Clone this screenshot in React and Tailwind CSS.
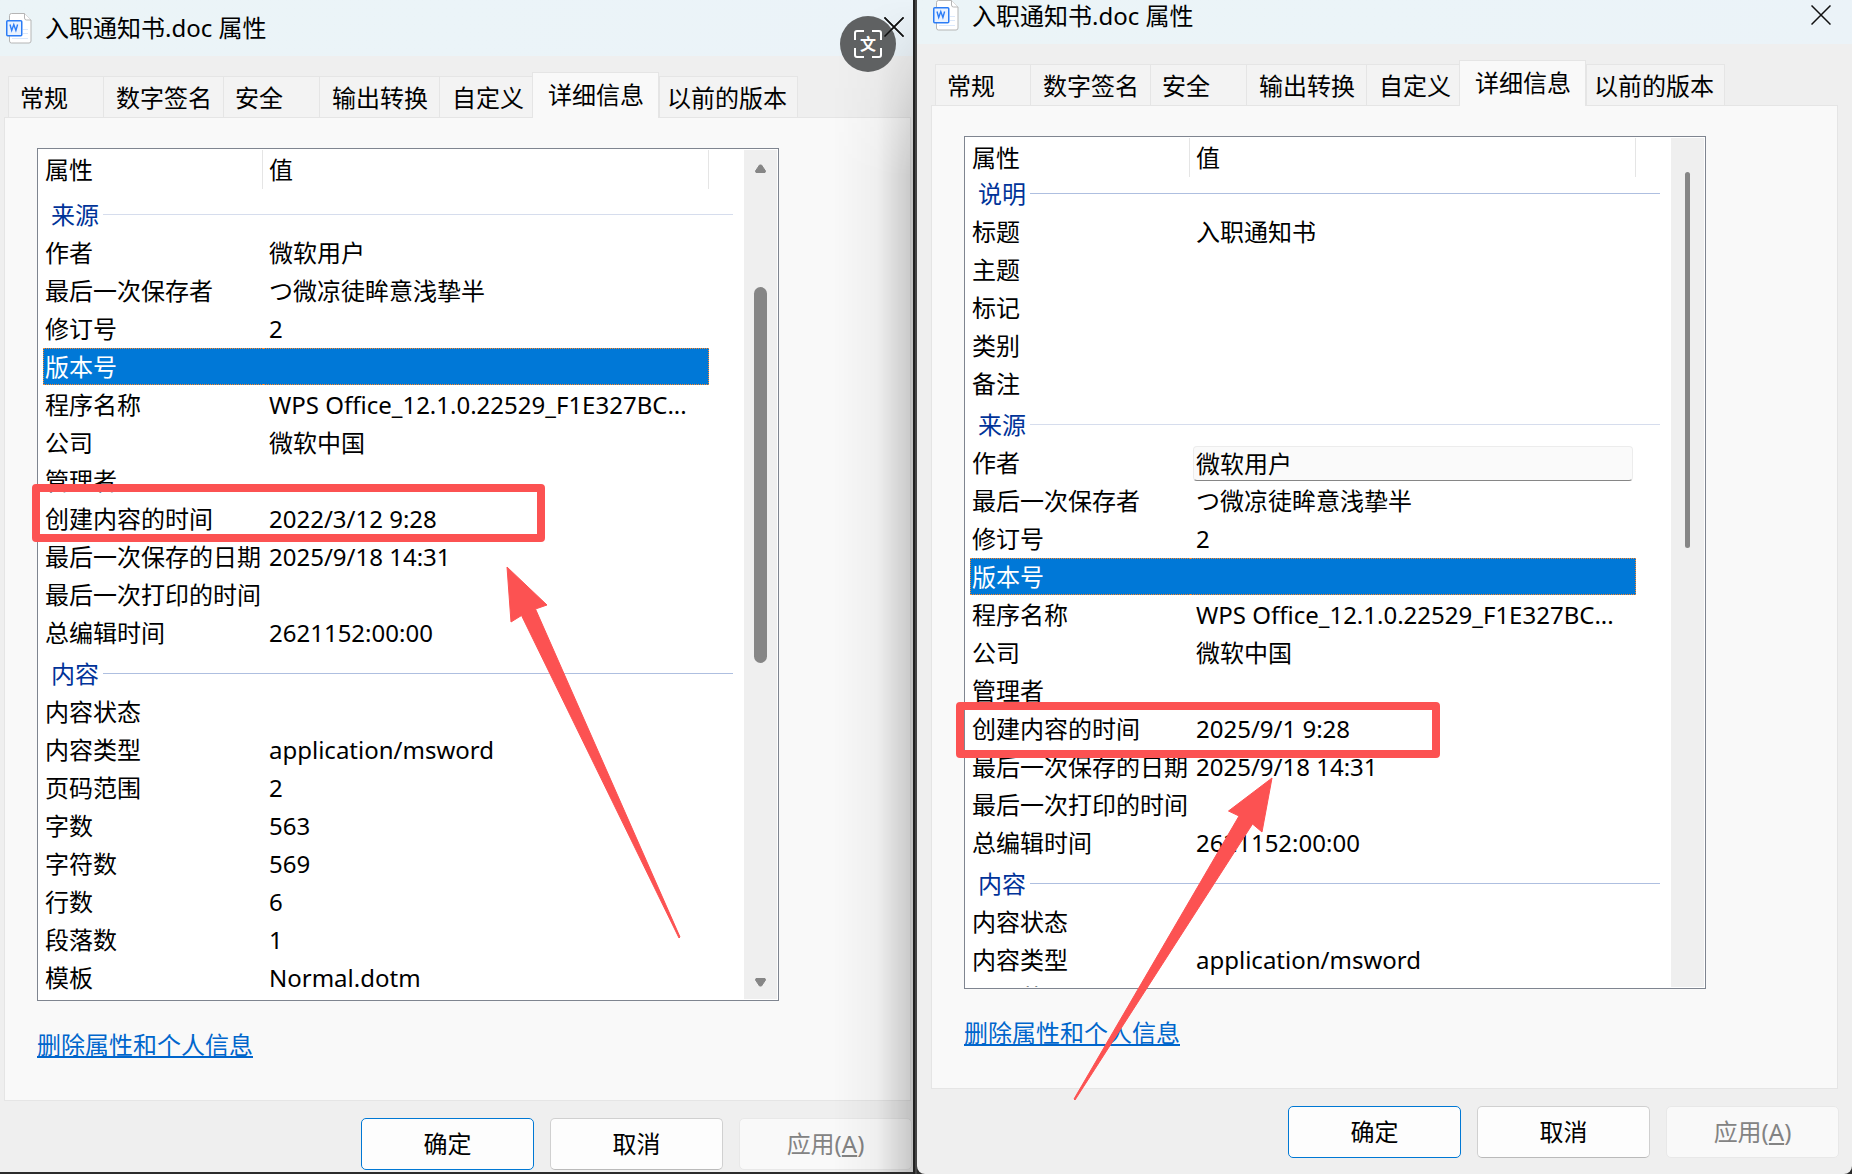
import React, { useState } from 'react';
import clsx from 'clsx';

const TABS = [
  { name: '常规', className: 'w-[95px] pl-[11px]' },
  { name: '数字签名', className: 'w-[120px] pl-3' },
  { name: '安全', className: 'w-24 pl-[11px]' },
  { name: '输出转换', className: 'w-[120px] pl-3' },
  { name: '自定义', className: 'w-[93px] pl-3' },
  { name: '详细信息', className: 'w-[127px] pl-[15px]' },
  { name: '以前的版本', className: 'w-[139px] pl-[7px] border-r' },
];

const originRows = (created) => [
  ['作者', '微软用户'],
  ['最后一次保存者', 'つ微凉徒眸意浅挚半'],
  ['修订号', '2'],
  ['版本号', ''],
  ['程序名称', 'WPS Office_12.1.0.22529_F1E327BC...'],
  ['公司', '微软中国'],
  ['管理者', ''],
  ['创建内容的时间', created],
  ['最后一次保存的日期', '2025/9/18 14:31'],
  ['最后一次打印的时间', ''],
  ['总编辑时间', '2621152:00:00'],
];

const contentRows = [
  ['内容状态', ''],
  ['内容类型', 'application/msword'],
  ['页码范围', '2'],
  ['字数', '563'],
  ['字符数', '569'],
  ['行数', '6'],
  ['段落数', '1'],
  ['模板', 'Normal.dotm'],
];

const leftGroups = [
  { title: '来源', faint: true, rows: originRows('2022/3/12 9:28') },
  { title: '内容', rows: contentRows },
];

const rightGroups = [
  {
    title: '说明',
    rows: [
      ['标题', '入职通知书'],
      ['主题', ''],
      ['标记', ''],
      ['类别', ''],
      ['备注', ''],
    ],
  },
  { title: '来源', faint: true, rows: originRows('2025/9/1 9:28') },
  { title: '内容', rows: contentRows.slice(0, 3) },
];

const DocIcon = () => (
  <svg width="26" height="31" viewBox="0 0 26 31" fill="none" aria-hidden="true">
    <path
      d="M5.5.5h13l6.5 6.5v21a2 2 0 0 1-2 2H5.500a2 2 0 0 1-2-2V2.500a2 2 0 0 1 2-2z"
      fill="#fff"
      stroke="#b5b5b5"
    />
    <path d="M18.500.5v4.500a2 2 0 0 0 2 2H25" fill="#fff" stroke="#b5b5b5" />
    <path d="M17 16.500h5M17 20.500h5M6 25.500h16" stroke="#dbe8fb" />
    <rect x=".75" y="7.750" width="15" height="15" rx="1" fill="#e9f2ff" stroke="#2b7cf6" strokeWidth="1.500" />
    <path d="M4 11.500l1.700 6 2.100-6 2.100 6 1.700-6" stroke="#2b7cf6" strokeWidth="1.400" />
  </svg>
);

const CloseIcon = () => (
  <svg width="20" height="20" viewBox="0 0 20 20" aria-hidden="true">
    <path d="M.5.5l19 19M19.500.5l-19 19" stroke="#111" strokeWidth="1.500" />
  </svg>
);

const Arrow = ({ down }) => (
  <svg width="11" height="9" viewBox="0 0 11 9" aria-hidden="true">
    <path
      d={down ? 'M1 .5h9l.5 1.500L6.500 8h-2L.5 2z' : 'M1 8.500h9l.5-1.500L6.500 1h-2L.5 7z'}
      fill="#868686"
      stroke="#868686"
      strokeLinejoin="round"
    />
  </svg>
);

const Scrollbar = ({ thin }) => (
  <div className="my-px mr-px flex w-[33px] shrink-0 flex-col items-center bg-[#efefef]">
    <div className="flex h-[34px] w-full items-center justify-center pt-[2px]">
      {!thin && <Arrow />}
    </div>
    <div
      className={clsx(
        'h-[376px] rounded-full bg-[#868686]',
        thin ? 'w-[5px]' : 'mt-[103px] w-[13px]'
      )}
    />
    <div className="mt-auto flex h-[34px] w-full items-center justify-center">
      {!thin && <Arrow down />}
    </div>
  </div>
);

const PropertyRow = ({ label, value, editing }) => {
  const selected = label === '版本号';
  const cell = 'mb-px h-[37px] whitespace-nowrap border-y border-dotted leading-9';

  return (
    <tr>
      <th scope="row" className="p-0 text-left font-normal">
        <div
          className={clsx(
            cell,
            'border-l pl-px',
            selected ? 'border-[#ff8728] bg-[#0078d7] text-white' : 'border-transparent'
          )}
        >
          {label}
        </div>
      </th>
      <td className="p-0">
        {editing ? (
          <input
            aria-label={label}
            defaultValue={value}
            className="ml-[3px] block h-[35px] w-[calc(100%-6px)] rounded-sm border border-[#ececec] border-b-[#868686] bg-[#fafafa] pb-[2px] pl-[2px] outline-none"
          />
        ) : (
          <div
            className={clsx(
              cell,
              'border-r pl-[6px]',
              selected ? 'border-[#ff8728] bg-[#0078d7] text-white' : 'border-transparent'
            )}
          >
            {value}
          </div>
        )}
      </td>
      <td className="p-0" />
    </tr>
  );
};

const PropertyList = ({ groups, thin, editing, bodyClass }) => (
  <div className="mt-[30px] mr-[131px] ml-8 flex h-[853px] overflow-hidden border border-[#7f8590] bg-white">
    <div className="mb-px min-w-0 flex-1 overflow-hidden pr-[11px] pl-[5px]">
      <table className="w-full table-fixed border-separate border-spacing-0">
        <colgroup>
          <col className="w-[220px]" />
          <col />
          <col className="w-6" />
        </colgroup>
        <thead>
          <tr>
            <th className="p-0 text-left font-normal">
              <div className="mt-px h-[39px] border-r border-[#e5e5e5] pl-[2px] leading-10">属性</div>
            </th>
            <th className="p-0 text-left font-normal">
              <div className="mt-px h-[39px] border-r border-[#e5e5e5] pl-[6px] leading-10">值</div>
            </th>
            <td />
          </tr>
        </thead>
      </table>
      <table className={clsx('w-full table-fixed border-separate border-spacing-0', bodyClass)}>
        <colgroup>
          <col className="w-[220px]" />
          <col />
          <col className="w-6" />
        </colgroup>
        {groups.map((group) => (
          <tbody key={group.title}>
            <tr>
              <th colSpan={3} scope="rowgroup" className="p-0 text-left font-normal">
                <div className="flex h-[41px] items-center gap-1 pt-px pl-2 leading-10 text-[#003399]">
                  <span className="pt-[2px]">{group.title}</span>
                  <span className={clsx('h-px flex-1', group.faint ? 'bg-[#d6dded]' : 'bg-[#aebfe0]')} />
                </div>
              </th>
            </tr>
            {group.rows.map(([label, value]) => (
              <PropertyRow
                key={label}
                label={label}
                value={value}
                editing={editing === label}
              />
            ))}
          </tbody>
        ))}
      </table>
    </div>
    <Scrollbar thin={thin} />
  </div>
);

const Dialog = ({ groups, thin, editing, className, titleClass, bodyClass, bodyTableClass, footerClass }) => {
  const [active, setActive] = useState('详细信息');

  return (
    <section className={clsx('relative flex flex-col overflow-hidden bg-[#efefef]', className)}>
      <header className={clsx('flex justify-between bg-linear-to-r from-[#ebf4f7] via-[#ebf4f8] to-[#ebf3f8]', titleClass)}>
        <div className="flex items-center gap-[13px]">
          <DocIcon />
          <h1>入职通知书.doc 属性</h1>
        </div>
        <button aria-label="关闭" className="pb-[2px]">
          <CloseIcon />
        </button>
      </header>

      <div className={bodyClass}>
        <div role="tablist" className="flex h-[61px] items-end pl-1">
          {TABS.map((tab) => (
            <button
              key={tab.name}
              role="tab"
              aria-selected={active === tab.name}
              onClick={() => setActive(tab.name)}
              className={clsx(
                'shrink-0 border-t border-l border-[#e5e5e5] text-left whitespace-nowrap',
                tab.className,
                active === tab.name
                  ? 'relative -mb-px h-[46px] border-r bg-[#f9f9f9] pb-[2px]'
                  : 'h-[41px] bg-[#f3f3f3] pt-[2px]'
              )}
            >
              {tab.name}
            </button>
          ))}
        </div>
        <div className="h-[984px] border border-[#e5e5e5] bg-[#f9f9f9]">
          <PropertyList groups={groups} thin={thin} editing={editing} bodyClass={bodyTableClass} />
          <a
            href="#remove"
            className="mt-[26px] ml-8 inline-block leading-9 text-[#0066cc] underline decoration-2 underline-offset-2"
          >
            删除属性和个人信息
          </a>
        </div>
      </div>

      <footer className={clsx('flex justify-end gap-4 pt-[17px]', footerClass)}>
        <button className="h-[52px] w-[173px] rounded-[5px] border border-[#0078d4] bg-[#fdfdfd]">确定</button>
        <button className="h-[52px] w-[173px] rounded-[5px] border border-[#d0d0d0] border-b-[#bababa] bg-[#fdfdfd]">
          取消
        </button>
        <button
          disabled
          className="h-[52px] w-[173px] rounded-[5px] border border-[#e8e8e8] bg-[#f9f9f9] text-[#838383]"
        >
          应用(<span className="underline underline-offset-2">A</span>)
        </button>
      </footer>
    </section>
  );
};

const CaptureBadge = () => (
  <div className="absolute top-4 left-[840px] flex size-14 items-center justify-center rounded-full bg-[#5f6162] text-white">
    <svg width="28" height="28" viewBox="0 0 28 28" fill="none" className="absolute" aria-hidden="true">
      <path
        d="M1 10V3a2 2 0 0 1 2-2h7M18 1h7a2 2 0 0 1 2 2v7M27 18v7a2 2 0 0 1-2 2h-7M10 27H3a2 2 0 0 1-2-2v-7"
        stroke="currentColor"
        strokeWidth="2"
      />
    </svg>
    <span className="text-base leading-4 font-bold">文</span>
    {/* the close cross of the dialog shows through the badge's edge */}
    <svg width="20" height="20" viewBox="0 0 20 20" className="absolute top-px -right-2" aria-hidden="true">
      <path d="M.5.5l19 19M19.500.5l-19 19" stroke="#111" strokeWidth="1.500" />
    </svg>
  </div>
);

const App = () => (
  <main className="relative grid min-h-screen grid-cols-[913fr_4px_935fr] overflow-hidden bg-[#2b2b2b] font-['Noto_Sans','Noto_Sans_CJK_SC',sans-serif] text-2xl text-black">
    <div className="relative mb-[2px] flex flex-col">
      <Dialog
        groups={leftGroups}
        className="flex-1"
        titleClass="h-14 pr-[9px] pl-[6px]"
        bodyClass="ml-1 mr-[2px]"
        bodyTableClass="mt-1"
        footerClass="pr-px"
      />
      <div className="pointer-events-none absolute inset-y-0 right-0 w-20 bg-linear-to-r from-transparent via-black/[0.04] via-55% to-black/20 mask-t-from-85%" />
      <CaptureBadge />
    </div>

    <div className="border-r-2 border-[#444] bg-[#222]" />

    <Dialog
      groups={rightGroups}
      thin
      editing="作者"
      className="rounded-b-lg"
      titleClass="h-11 pr-[21px] pb-[13px] pl-4"
      bodyClass="mx-[14px]"
      bodyTableClass="-mt-[5px]"
      footerClass="pr-[13px] pb-4"
    />

    {/* annotations */}
    <div className="absolute top-[484px] left-8 h-[58px] w-[513px] rounded border-8 border-[#fc5252]" />
    <div className="absolute top-[702px] left-[956px] h-14 w-[484px] rounded border-8 border-[#fc5252]" />
    <svg
      width="1852"
      height="1174"
      viewBox="0 0 1852 1174"
      className="pointer-events-none absolute top-0 left-0"
      fill="#fc5252"
      stroke="#fc5252"
      strokeLinejoin="round"
      aria-hidden="true"
    >
      <path d="M507 567L547 605L535.500 609L680 937L679 938L521.500 615.500L511 622Z" />
      <path d="M1272 778L1228.500 811L1239 816L1074 1099L1075 1100L1252.500 824L1262 832Z" />
    </svg>
  </main>
);

export default App;
